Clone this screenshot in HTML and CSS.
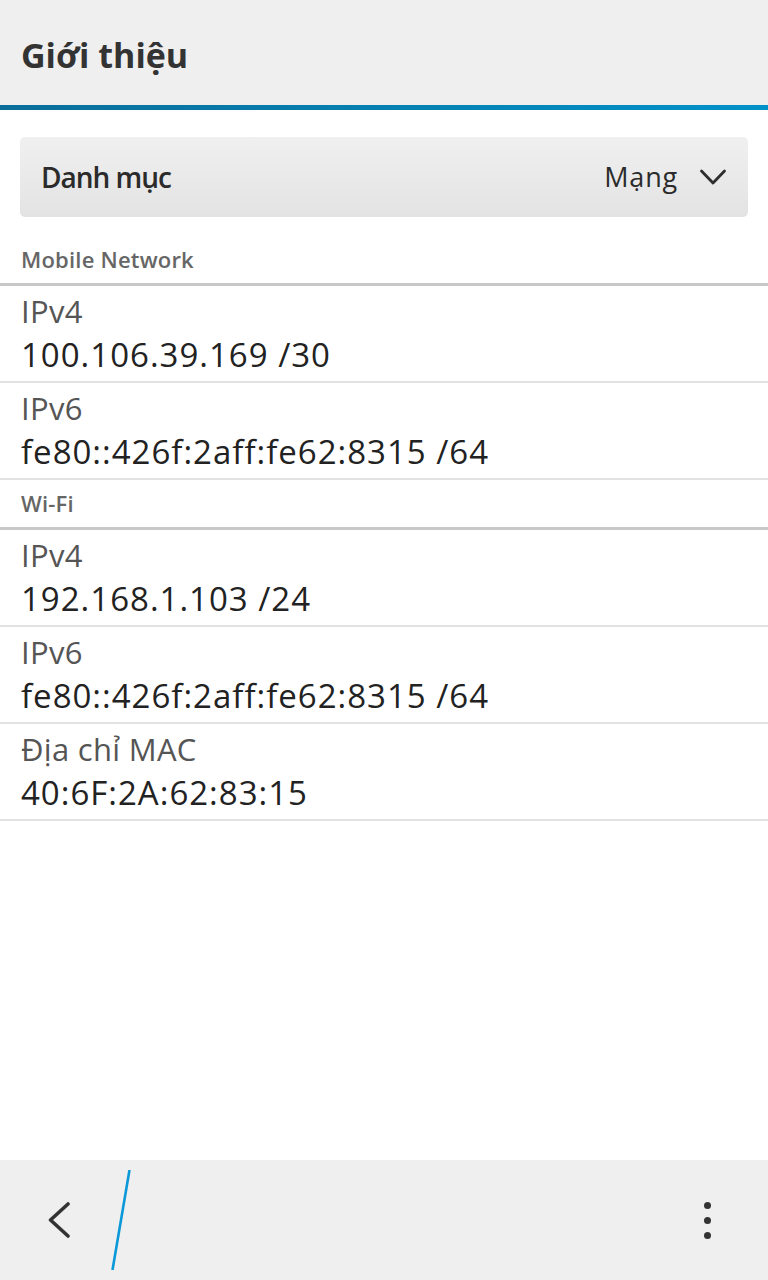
FILE: index.html
```html
<!DOCTYPE html>
<html lang="vi">
<head>
<meta charset="utf-8">
<link rel="stylesheet" href="styles.css">
</head>
<body>
<div class="app">
  <header class="titlebar">
    <h1 class="title">Giới thiệu</h1>
  </header>
  <main class="content">
    <div class="dropdown">
      <span class="dd-label">Danh mục</span>
      <span class="dd-value">Mạng
        <svg class="chev" width="28" height="17" viewBox="0 0 28 17"><path d="M2.5 2 L14 14 L25.5 2" fill="none" stroke="#2e2e2e" stroke-width="2.8" stroke-linecap="round" stroke-linejoin="round"/></svg>
      </span>
    </div>
    <div class="section">Mobile Network</div>
    <div class="row"><div class="label">IPv4</div><div class="value">100.106.39.169 /30</div></div>
    <div class="row"><div class="label">IPv6</div><div class="value">fe80::426f:2aff:fe62:8315 /64</div></div>
    <div class="section">Wi-Fi</div>
    <div class="row"><div class="label">IPv4</div><div class="value">192.168.1.103 /24</div></div>
    <div class="row"><div class="label">IPv6</div><div class="value">fe80::426f:2aff:fe62:8315 /64</div></div>
    <div class="row"><div class="label">Địa chỉ MAC</div><div class="value">40:6F:2A:62:83:15</div></div>
  </main>
  <footer class="actionbar">
    <svg class="back" width="30" height="36" viewBox="0 0 30 36"><path d="M24 2 L6.5 18 L24 34" fill="none" stroke="#333" stroke-width="3.6" stroke-linecap="round" stroke-linejoin="round"/></svg>
    <svg class="slash" width="22" height="100" viewBox="0 0 22 100"><line x1="19.5" y1="0" x2="2.5" y2="100" stroke="#0a98d8" stroke-width="2.6"/></svg>
    <div class="spacer"></div>
    <div class="more"><span></span><span></span><span></span></div>
  </footer>
</div>
</body>
</html>
```
FILE: styles.css
```css
* { box-sizing: border-box; margin: 0; padding: 0; }
html, body { width: 768px; height: 1280px; background: #fff; }
body { font-family: "Open Sans", "Liberation Sans", sans-serif; color: #222; }
.app { display: flex; flex-direction: column; height: 1280px; }
.titlebar {
  height: 110px;
  background: #efefef;
  border-bottom: 5px solid #0b7fb0;
  border-image: linear-gradient(90deg, #0a6e99, #0092c9) 1;
  padding: 35px 21px 0;
}
.title { font-size: 34px; line-height: 40px; font-weight: 700; color: #333; }
.content { flex: 1; padding-top: 27px; }
.dropdown {
  margin: 0 20px 19px;
  height: 80px;
  border-radius: 5px;
  background: linear-gradient(#f0f0f0, #e3e3e3);
  display: flex; align-items: center; justify-content: space-between;
  padding: 0 21px 0 21px;
}
.dd-label { font-size: 28px; line-height: 38px; font-weight: 600; color: #2b2b2b; letter-spacing: -1px; }
.dd-value { font-size: 27px; line-height: 38px; color: #2b2b2b; letter-spacing: 0.8px; display: flex; align-items: center; gap: 21px; }
.chev { margin-top: 1px; }
.section {
  height: 50px;
  padding: 8px 21px 0;
  font-size: 22px; line-height: 30px; font-weight: 600; color: #666;
  letter-spacing: 0.2px;
  border-bottom: 3px solid #c8c8c8;
}
.row {
  height: 97px;
  padding: 6px 21px 0;
  border-bottom: 2px solid #e2e2e2;
}
.label { font-size: 31px; color: #555; line-height: 38px; letter-spacing: 0.3px; }
.value { font-size: 33px; color: #222; line-height: 44px; margin-top: 3px; letter-spacing: 1px; }
.actionbar {
  height: 120px;
  background: #efefef;
  display: flex; align-items: center;
  padding: 0 57px 0 44px;
}
.back { display: block; }
.slash { display: block; margin-left: 36px; }
.spacer { flex: 1; }
.more { display: flex; flex-direction: column; gap: 8px; align-items: center; width: 7px; margin-top: 0; }
.more span { width: 7px; height: 7px; border-radius: 50%; background: #333; }
```
